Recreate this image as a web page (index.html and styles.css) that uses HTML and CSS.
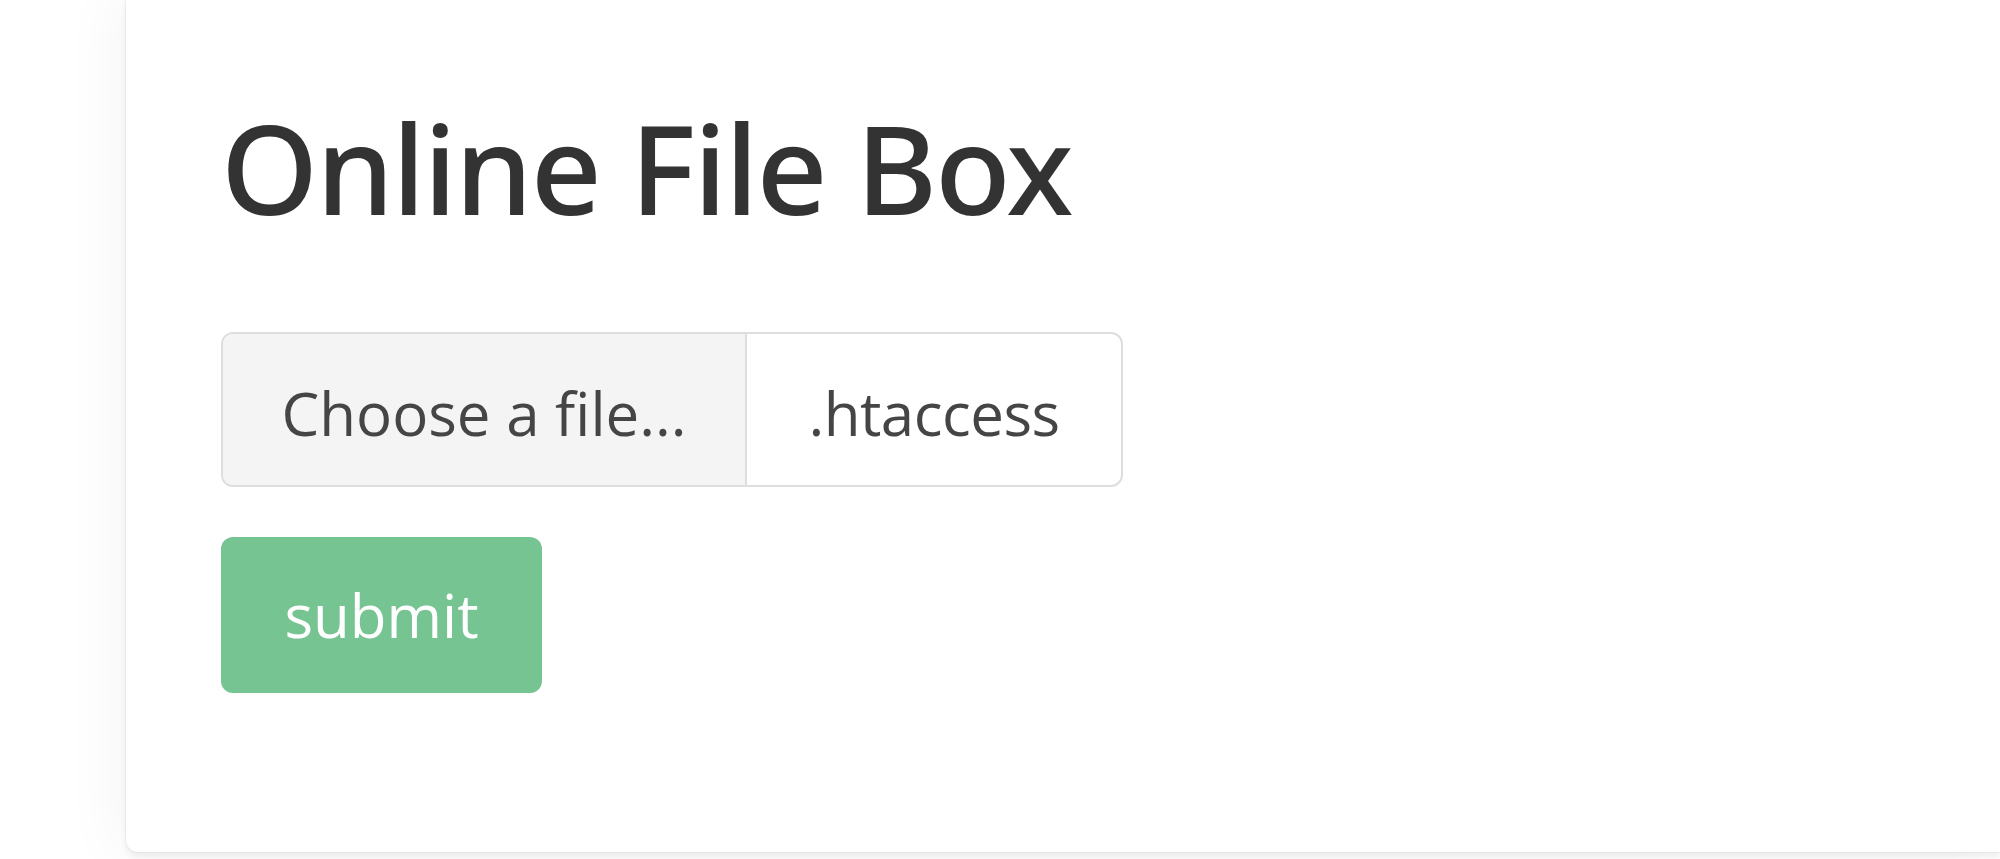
FILE: index.html
```html
<!DOCTYPE html>
<html>
<head>
<meta charset="utf-8">
<link rel="stylesheet" href="styles.css">
<title>Online File Box</title>
</head>
<body>
<div class="page">
  <div class="card">
    <h1 class="title">Online File Box</h1>
    <form class="upload-form">
      <div class="file-group">
        <label class="file-label">Choose a file...</label>
        <span class="file-name">.htaccess</span>
      </div>
      <button type="button" class="btn-submit">submit</button>
    </form>
  </div>
</div>
</body>
</html>
```
FILE: styles.css
```css
html, body {
  margin: 0;
  padding: 0;
  background: #ffffff;
  overflow: hidden;
  height: 859px;
}
.page {
  padding-left: 126px;
  height: 859px;
  overflow: hidden;
}
.card {
  margin-top: -10px;
  height: 862px;
  box-sizing: border-box;
  background: #ffffff;
  border-radius: 12px 0 0 12px;
  box-shadow: 0 5px 6px rgba(0,0,0,0.06), -10px 0 60px rgba(0,0,0,0.045), 0 0 2px rgba(0,0,0,0.12);
  padding: 102px 0 0 95px;
  font-family: "Open Sans", "Noto Sans", sans-serif;
}
.title {
  margin: 0;
  font-family: "Noto Sans", "Open Sans", sans-serif;
  font-size: 124px;
  line-height: 150px;
  font-weight: 500;
  color: #333333;
  letter-spacing: -2px;
  white-space: nowrap;
}
.upload-form {
  margin-top: 90px;
  display: flex;
  flex-direction: column;
  align-items: flex-start;
  gap: 50px;
}
.file-group {
  display: flex;
  height: 155px;
  box-sizing: border-box;
  border: 2px solid #dedede;
  border-radius: 12px;
  overflow: hidden;
}
.file-label, .file-name {
  display: flex;
  align-items: center;
  justify-content: center;
  box-sizing: border-box;
  font-size: 60px;
  color: #454545;
  letter-spacing: 0;
  white-space: nowrap;
  padding-top: 6px;
}
.file-label {
  background: #f4f4f4;
  border-right: 2px solid #dedede;
  width: 524px;
}
.file-name {
  width: 374px;
  letter-spacing: -0.5px;
}
.btn-submit {
  width: 321px;
  height: 156px;
  border: none;
  border-radius: 12px;
  background: #77c493;
  color: #ffffff;
  font-family: "Open Sans", "Noto Sans", sans-serif;
  font-size: 60px;
  letter-spacing: 0;
  padding: 0;
  white-space: nowrap;
}
```
